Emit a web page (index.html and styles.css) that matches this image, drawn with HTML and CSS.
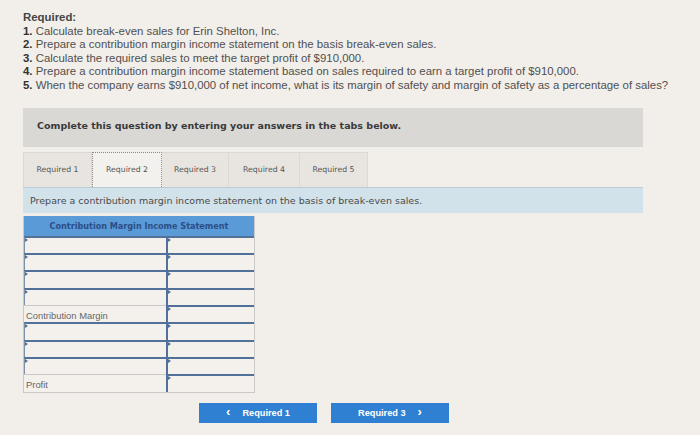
FILE: index.html
```html
<!DOCTYPE html>
<html>
<head>
<meta charset="utf-8">
<link rel="stylesheet" href="styles.css">
</head>
<body>
<div class="page">
  <div class="required">
    <div class="req-title">Required:</div>
    <div><b>1.</b> Calculate break-even sales for Erin Shelton, Inc.</div>
    <div><b>2.</b> Prepare a contribution margin income statement on the basis break-even sales.</div>
    <div><b>3.</b> Calculate the required sales to meet the target profit of $910,000.</div>
    <div><b>4.</b> Prepare a contribution margin income statement based on sales required to earn a target profit of $910,000.</div>
    <div><b>5.</b> When the company earns $910,000 of net income, what is its margin of safety and margin of safety as a percentage of sales?</div>
  </div>

  <div class="instruct">Complete this question by entering your answers in the tabs below.</div>

  <div class="tabs">
    <div class="tab t1">Required 1</div>
    <div class="tab t2 active">Required 2</div>
    <div class="tab t3">Required 3</div>
    <div class="tab t4">Required 4</div>
    <div class="tab t5">Required 5</div>
  </div>

  <div class="prompt">Prepare a contribution margin income statement on the basis of break-even sales.</div>

  <div class="stmt">
    <div class="stmt-head">Contribution Margin Income Statement</div>
    <div class="row"><div class="cell in"></div><div class="cell in"></div></div>
    <div class="row"><div class="cell in"></div><div class="cell in"></div></div>
    <div class="row"><div class="cell in"></div><div class="cell in"></div></div>
    <div class="row"><div class="cell in"></div><div class="cell in"></div></div>
    <div class="row"><div class="cell label">Contribution Margin</div><div class="cell in"></div></div>
    <div class="row"><div class="cell in"></div><div class="cell in"></div></div>
    <div class="row"><div class="cell in"></div><div class="cell in"></div></div>
    <div class="row"><div class="cell in"></div><div class="cell in"></div></div>
    <div class="row last"><div class="cell label">Profit</div><div class="cell in"></div></div>
  </div>

  <div class="nav">
    <div class="btn"><span class="chev">&lsaquo;</span>Required 1</div>
    <div class="btn"><span>Required 3</span><span class="chev right">&rsaquo;</span></div>
  </div>
</div>
</body>
</html>
```

FILE: styles.css
```css
html, body {
  margin: 0;
  padding: 0;
  background: #f2eee9;
}
body {
  width: 700px;
  height: 435px;
  overflow: hidden;
  font-family: "Liberation Sans", Arial, sans-serif;
}
.page {
  padding: 11px 0 0 23px;
  width: 620px;
}
.required {
  font-size: 11.4px;
  line-height: 13.6px;
  color: #505050;
  white-space: nowrap;
}
.required b {
  color: #333;
}
.req-title {
  font-weight: bold;
  color: #444;
}
.instruct {
  margin-top: 15px;
  height: 39px;
  background: #d9d8d5;
  box-sizing: border-box;
  padding: 12px 0 0 14px;
  font-family: "DejaVu Sans", Verdana, sans-serif;
  font-size: 9.5px;
  font-weight: bold;
  color: #3a3a3a;
}
.tabs {
  display: flex;
  margin-top: 5px;
  height: 35px;
}
.tab {
  box-sizing: border-box;
  height: 35px;
  background: #e8e5e0;
  border: 1px solid #dcd8d2;
  border-bottom: none;
  border-left: none;
  font-family: "DejaVu Sans", Verdana, sans-serif;
  font-size: 7.8px;
  color: #555;
  display: flex;
  align-items: center;
  justify-content: center;
}
.t1 { width: 69px; border-left: 1px solid #dcd8d2; }
.t2 { width: 70px; }
.t3 { width: 67px; }
.t4 { width: 71px; }
.t5 { width: 68px; }
.tab.active {
  background: #f3f1ed;
  border: 1px dotted #8a8a8a;
  border-bottom: none;
}
.prompt {
  height: 26px;
  background: #d2e2eb;
  border-top: 1px solid #b9ccd8;
  box-sizing: border-box;
  padding: 7px 0 0 7px;
  font-family: "DejaVu Sans", Verdana, sans-serif;
  font-size: 9.5px;
  color: #4a4a4a;
}
.stmt {
  margin-top: 3px;
  width: 232px;
  border: 1px solid #c9c9c9;
  border-top: none;
  box-sizing: border-box;
}
.stmt-head {
  height: 20px;
  background: #5a9ad6;
  color: #2b4f86;
  font-family: "DejaVu Sans", Verdana, sans-serif;
  font-size: 8.1px;
  font-weight: bold;
  text-align: center;
  line-height: 20px;
}
.row {
  display: grid;
  grid-template-columns: 142px 1fr;
  height: 17.35px;
}
.cell {
  box-sizing: border-box;
  position: relative;
}
.cell.in {
  border-top: 2px solid #51719a;
  border-left: 1px solid #7c90aa;
  background: #f4f1ec;
}
.cell.in::before {
  content: "";
  position: absolute;
  left: 0;
  top: 0;
  border-left: 3px solid #51719a;
  border-top: 2px solid transparent;
  border-bottom: 2px solid transparent;
}
.row .cell.in + .cell.in,
.row .label + .cell.in {
  border-left: 2px solid #51719a;
}
.cell.label {
  border-top: 1px solid #c9c9c9;
  font-size: 9.4px;
  color: #666;
  padding: 4px 0 0 2px;
  background: #f4f1ec;
}
.nav {
  display: flex;
  gap: 14px;
  margin-top: 10px;
  padding-left: 176px;
}
.btn {
  width: 118px;
  height: 20px;
  background: #2f7fd2;
  color: #ffffff;
  font-size: 9.2px;
  font-weight: bold;
  display: flex;
  align-items: center;
  justify-content: center;
  box-sizing: border-box;
}
.chev {
  font-size: 13px;
  font-weight: bold;
  margin-right: 12px;
  line-height: 1;
  margin-top: -2px;
}
.chev.right {
  margin-right: 0;
  margin-left: 12px;
}
```
